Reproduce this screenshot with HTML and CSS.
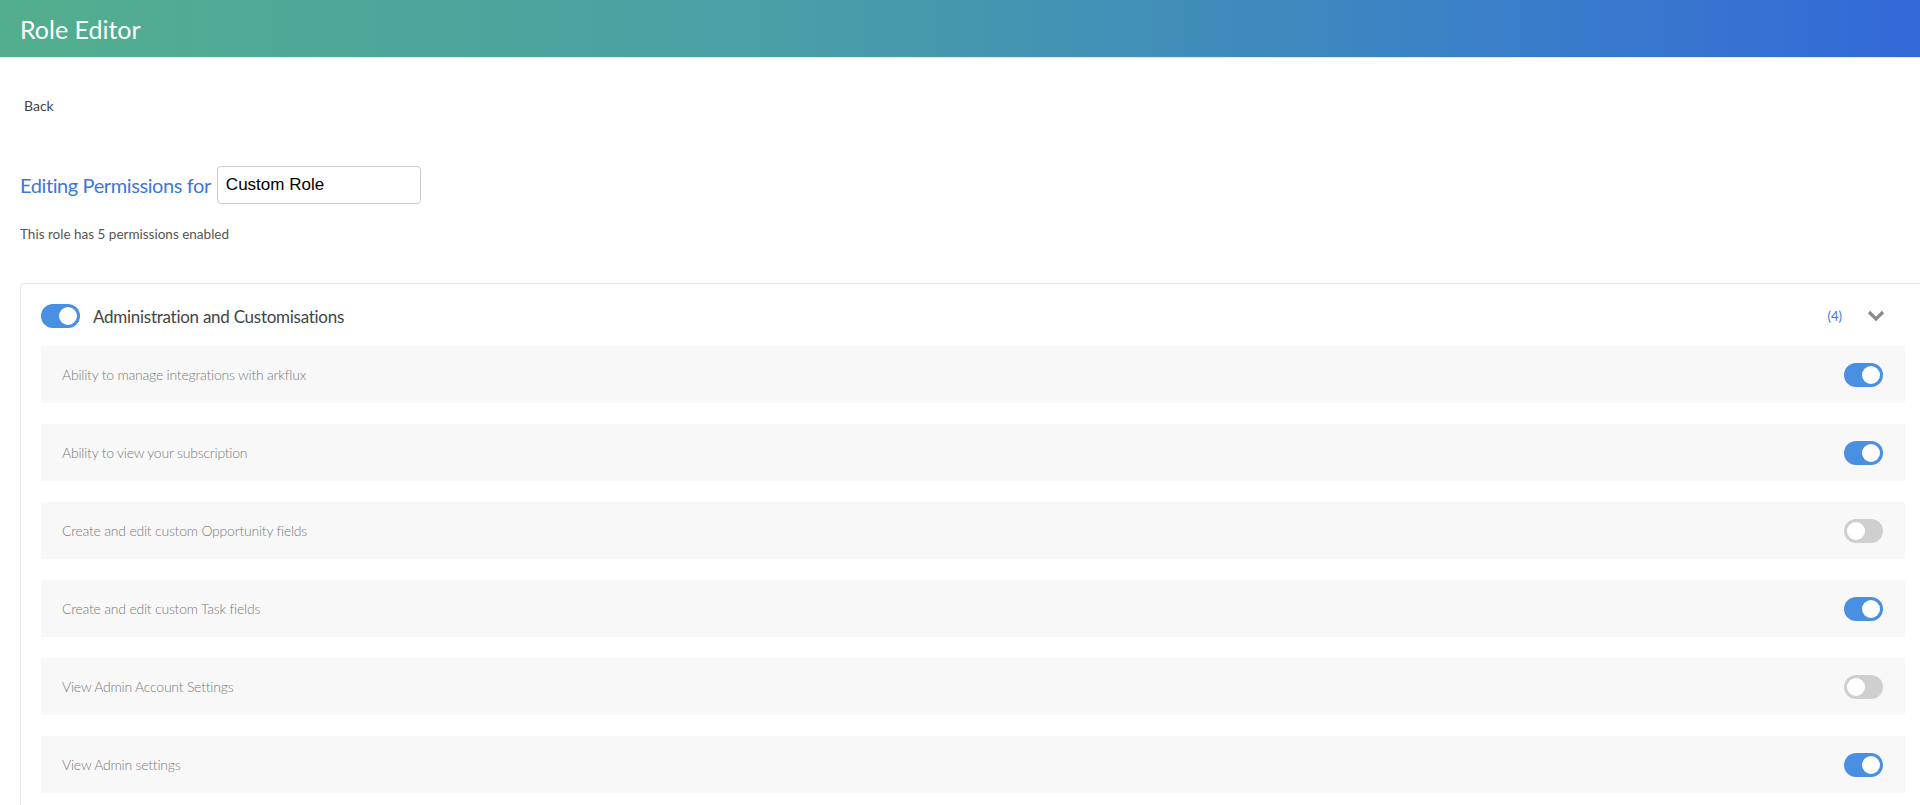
FILE: index.html
```html
<!DOCTYPE html>
<html lang="en">
<head>
    <meta charset="UTF-8">
    <title>Role Editor</title>
    <link rel="stylesheet" href="styles.css">
</head>
<body>
    <header class="topbar">
        <h1>Role Editor</h1>
    </header>

    <main class="page">
        <a class="back" href="#">Back</a>

        <div class="title-row">
            <h2>Editing Permissions for</h2>
            <input type="text" class="role-name" value="Custom Role">
        </div>
        <p class="summary">This role has 5 permissions enabled</p>

        <section class="card">
            <div class="group-head">
                <span class="switch on"></span>
                <span class="group-title">Administration and Customisations</span>
                <span class="count">(4)</span>
                <svg class="chevron" width="18" height="12" viewBox="0 0 18 12">
                    <path d="M2 2 L9 9 L16 2" fill="none" stroke="#8a8a8a" stroke-width="3.2"/>
                </svg>
            </div>

            <div class="perm">
                <span>Ability to manage integrations with arkflux</span>
                <span class="switch on"></span>
            </div>
            <div class="perm">
                <span>Ability to view your subscription</span>
                <span class="switch on"></span>
            </div>
            <div class="perm">
                <span>Create and edit custom Opportunity fields</span>
                <span class="switch"></span>
            </div>
            <div class="perm">
                <span>Create and edit custom Task fields</span>
                <span class="switch on"></span>
            </div>
            <div class="perm">
                <span>View Admin Account Settings</span>
                <span class="switch"></span>
            </div>
            <div class="perm">
                <span>View Admin settings</span>
                <span class="switch on"></span>
            </div>
        </section>
    </main>
</body>
</html>
```

FILE: styles.css
```css
html, body {
    margin: 0;
    padding: 0;
    overflow: hidden;
}
body {
    font-family: Lato, "Open Sans", Arial, sans-serif;
    color: #444;
    background: #fff;
}
.topbar {
    height: 58px;
    padding: 0 20px;
    display: flex;
    align-items: center;
    background: linear-gradient(90deg, #53ae8e 0%, #4a9fa6 40%, #3a7fc8 78%, #3369d8 100%);
    border-bottom: 1px solid #dfe9f7;
    box-sizing: border-box;
}
.topbar h1 {
    margin: 0;
    font-size: 25px;
    font-weight: 400;
    color: #fff;
}
.page {
    padding: 0 20px;
}
.back {
    display: inline-block;
    margin-top: 38px;
    padding-left: 4px;
    font-size: 14px;
    line-height: 20px;
    color: #444;
    text-decoration: none;
}
.title-row {
    display: flex;
    align-items: center;
    gap: 6px;
    margin-top: 50px;
}
.title-row h2 {
    margin: 0;
    font-size: 20px;
    font-weight: 400;
    letter-spacing: -0.4px;
    color: #3a78d8;
}
.role-name {
    width: 204px;
    height: 38px;
    padding: 0 8px;
    border: 1px solid #ccc;
    border-radius: 4px;
    box-sizing: border-box;
    font-family: "Liberation Sans", Arial, sans-serif;
    font-size: 17px;
    color: #000;
}
.summary {
    margin: 21px 0 0;
    font-size: 13.5px;
    line-height: 18px;
    color: #555;
}
.card {
    margin: 40px -26px 0 0;
    padding: 20px 20px 40px 20px;
    border: 1px solid #e6e6e6;
    border-radius: 4px;
}
.group-head {
    display: flex;
    align-items: center;
    height: 24px;
    margin-bottom: 18px;
}
.group-title {
    margin-left: 13px;
    font-size: 17px;
    letter-spacing: -0.27px;
    color: #444;
    flex: 1;
}
.count {
    font-size: 13px;
    color: #3a78d8;
    margin-right: 25px;
}
.chevron {
    margin-right: 20px;
}
.perm {
    display: flex;
    align-items: center;
    justify-content: space-between;
    height: 57px;
    padding: 0 22px 0 21px;
    margin-bottom: 21px;
    background: #f8f8f8;
    font-size: 14px;
    font-weight: 300;
    letter-spacing: -0.22px;
    color: #7a7a7a;
}
.switch {
    position: relative;
    display: inline-block;
    width: 39px;
    height: 24px;
    border-radius: 12px;
    background: #cfcfcf;
    flex: none;
}
.switch::after {
    content: "";
    position: absolute;
    top: 3px;
    left: 3px;
    width: 18px;
    height: 18px;
    border-radius: 50%;
    background: #fff;
}
.switch.on {
    background: #4a90e2;
}
.switch.on::after {
    left: 18px;
}
```
